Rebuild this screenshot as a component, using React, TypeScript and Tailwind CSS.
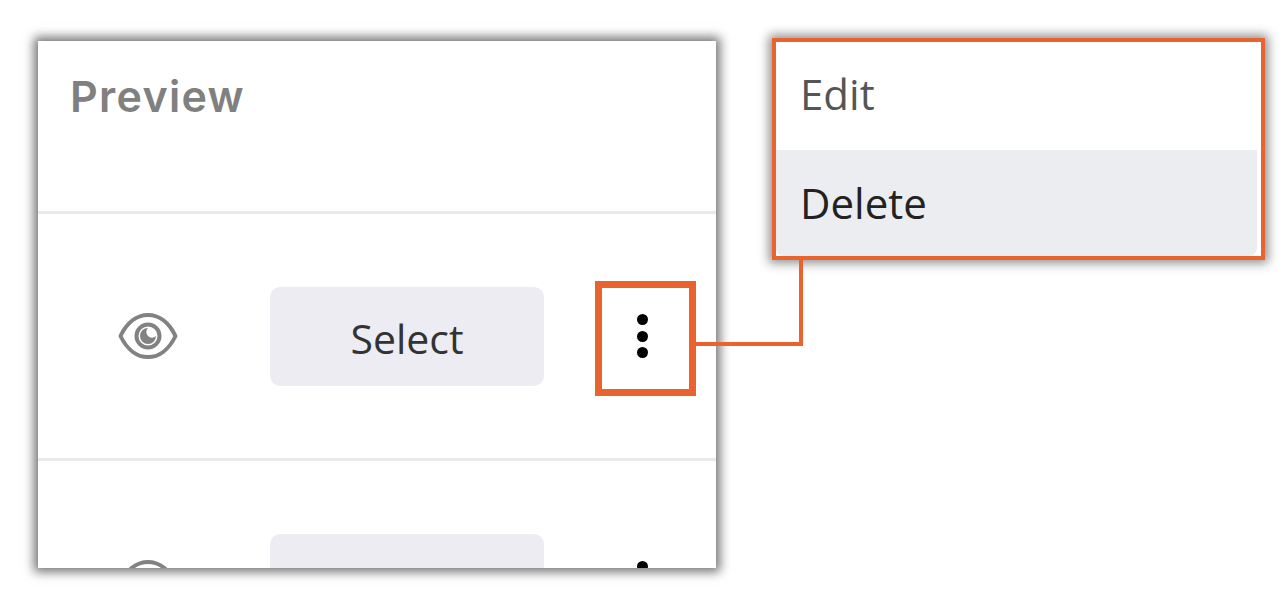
const ORANGE = "border-[#e8632e]";

function EyeIcon() {
  return (
    <svg width="60" height="46" viewBox="0 0 60 46" fill="none" className="block">
      <path
        d="M2.5 23C9 9.500 19 2 30 2s21 7.500 27.500 21C51 36.500 41 44 30 44S9 36.500 2.500 23Z"
        stroke="#828282"
        strokeWidth="4"
        strokeLinejoin="round"
      />
      <circle cx="30" cy="23" r="11.500" stroke="#828282" strokeWidth="4" />
      <path d="M30 15a8 8 0 1 0 8 8a5 5 0 0 1-8-8Z" fill="#828282" />
    </svg>
  );
}

function Kebab() {
  return (
    <div className="flex flex-col gap-[5.5px]">
      <span className="block w-[11px] h-[11px] rounded-full bg-black" />
      <span className="block w-[11px] h-[11px] rounded-full bg-black" />
      <span className="block w-[11px] h-[11px] rounded-full bg-black" />
    </div>
  );
}

function Row({ label }: { label?: string }) {
  return (
    <div className="h-[247px] shrink-0 border-t-[3px] border-[#e9e9ee] flex items-center pl-[80px]">
      <EyeIcon />
      <button className="ml-[92px] w-[274px] h-[99px] pt-[4px] rounded-[10px] bg-[#edecf2] text-[41px] leading-[56px] text-[#333333] font-['Open_Sans',sans-serif]">
        {label}
      </button>
      <div className="ml-[93px]">
        <Kebab />
      </div>
    </div>
  );
}

export default function App() {
  return (
    <div className="relative w-[1284px] h-[614px] overflow-hidden bg-white">
      <div className="flex items-start pl-[38px] pt-[38px]">
        {/* card */}
        <div className="mt-[3px] w-[678px] h-[527px] overflow-hidden bg-white shadow-[0_0_10px_4px_rgba(0,0,0,0.55)]">
          <div className="h-[170px] pl-[32px] pt-[26px] text-[43px] leading-[58px] font-semibold tracking-[1.3px] text-[#808080] font-['Inter',sans-serif]">
            Preview
          </div>
          <Row label="Select" />
          {/* second row is cut by the card edge before its label */}
          <Row />
        </div>

        {/* menu */}
        <div className={`ml-[56px] w-[493px] h-[222px] border-[4px] ${ORANGE} bg-white pr-[4px] shadow-[0_0_10px_3px_rgba(0,0,0,0.45)] font-['Open_Sans',sans-serif] text-[42px]`}>
          <div className="h-[108px] pl-[24px] pt-[24px] leading-[56px] text-[#555555]">Edit</div>
          <div className="h-[106px] pl-[24px] pt-[25px] leading-[56px] rounded-b-lg bg-[#ecedf1] text-[#222222]">Delete</div>
        </div>
      </div>

      {/* callout around the kebab */}
      <div className={`absolute left-[595px] top-[281px] w-[101px] h-[115px] border-[7px] ${ORANGE}`} />
      {/* connector */}
      <div className={`absolute left-[696px] top-[260px] w-[107px] h-[86px] border-r-[4px] border-b-[4px] ${ORANGE}`} />
    </div>
  );
}
